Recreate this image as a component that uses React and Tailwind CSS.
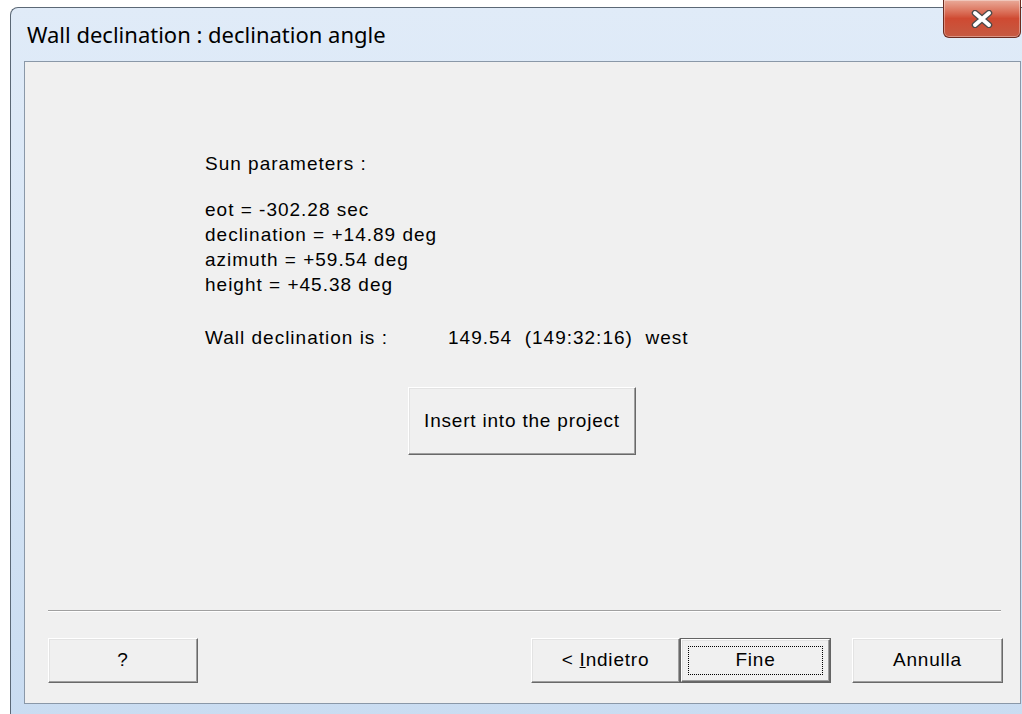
import React from 'react';

// classic raised 3D push button
const btnBase =
  'flex items-center justify-center bg-[#f0f0f0] border border-t-white border-l-white border-r-[#696969] border-b-[#696969] shadow-[inset_-1px_-1px_0_#a0a0a0,inset_1px_1px_0_#e3e3e3] text-black';

const CloseGlyph = () => (
  <svg width="24" height="18" viewBox="0 0 24 18">
    <path d="M5 3 L19 15 M19 3 L5 15" stroke="#4a4a4a" strokeWidth="6.5" strokeLinecap="round" />
    <path d="M5 3 L19 15 M19 3 L5 15" stroke="#ffffff" strokeWidth="4" strokeLinecap="round" />
  </svg>
);

const sunLines = [
  'eot = -302.28 sec',
  'declination = +14.89 deg',
  'azimuth = +59.54 deg',
  'height = +45.38 deg',
];

export default function App() {
  const bodyFont = { fontFamily: '"Liberation Sans", Arial, sans-serif' };

  return (
    <div className="w-[1022px] h-[714px] bg-white overflow-hidden">
      <div className="ml-[10px] mt-[7px] w-[1026px] h-[720px] rounded-tl-[8px] border-l border-t border-[#5b6876] bg-gradient-to-b from-[#e0ebf8] via-[#d6e5f5] to-[#c9dcf1] flex flex-col">
        {/* caption */}
        <div className="h-[53px] flex items-start pr-[15px]">
          <div
            className="flex-1 pl-[16px] pt-[12px] text-[22px] leading-[28px] text-black"
            style={{ fontFamily: '"Noto Sans", "Open Sans", sans-serif' }}
          >
            Wall declination : declination angle
          </div>
          <button className="-mt-[8px] w-[78px] h-[38px] rounded-b-[6px] border border-t-0 border-[#6b2b20] bg-gradient-to-b from-[#e9ab9a] via-[#cf4a32] to-[#c55a42] shadow-[inset_0_0_0_1px_rgba(255,255,255,0.35)] flex items-center justify-center">
            <CloseGlyph />
          </button>
        </div>

        {/* client area */}
        <div
          className="ml-[13px] w-[997px] h-[643px] border border-[#8a98a8] bg-[#f0f0f0] flex flex-col text-[19px] tracking-[1px] text-black"
          style={bodyFont}
        >
          <div className="pl-[180px] pt-[90px]">
            <p className="h-[24px] leading-[24px]">Sun parameters :</p>
            <div className="mt-[22px]">
              {sunLines.map((line) => (
                <p key={line} className="h-[25px] leading-[24px]">
                  {line}
                </p>
              ))}
            </div>
            <div className="mt-[28px] flex h-[24px] leading-[24px]">
              <span className="w-[243px]">Wall declination is :</span>
              <span className="whitespace-pre">149.54  (149:32:16)  west</span>
            </div>
          </div>

          <div className="mt-[37px] pl-[383px]">
            <button className={`${btnBase} w-[228px] h-[68px] tracking-[0.8px]`}>Insert into the project</button>
          </div>

          <div className="flex-1"></div>

          <div className="ml-[23px] mr-[19px] border-t border-b border-t-[#a0a0a0] border-b-white"></div>

          <div className="mt-[26px] mb-[20px] ml-[23px] mr-[17px] flex h-[45px] tracking-[0.8px]">
            <button className={`${btnBase} w-[150px]`}>?</button>
            <div className="flex-1"></div>
            <button className={`${btnBase} w-[149px]`}>
              &lt; <span className="underline ml-[6px]">I</span>ndietro
            </button>
            <button className="w-[151px] border border-[#646464] bg-[#f0f0f0] flex">
              <div className="flex-1 flex border border-t-white border-l-white border-r-[#696969] border-b-[#696969] shadow-[inset_-1px_-1px_0_#a0a0a0,inset_1px_1px_0_#e3e3e3] p-[6px]">
                <div className="flex-1 flex items-center justify-center border border-dotted border-black">Fine</div>
              </div>
            </button>
            <button className={`${btnBase} w-[151px] ml-[21px]`}>Annulla</button>
          </div>
        </div>
      </div>
    </div>
  );
}
